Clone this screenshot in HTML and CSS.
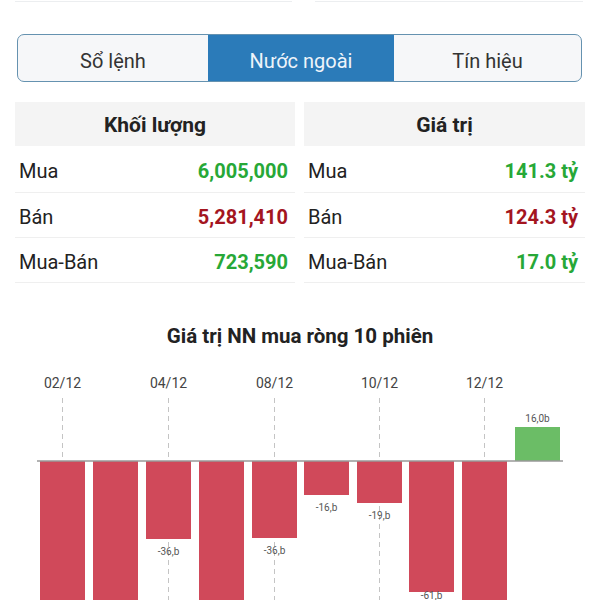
FILE: index.html
```html
<!DOCTYPE html>
<html lang="vi">
<head>
<meta charset="UTF-8">
<meta name="viewport" content="width=device-width, initial-scale=1.0">
<title>Nước ngoài</title>
<link rel="stylesheet" href="styles.css">
</head>
<body>
  <div class="top-strip">
    <div class="strip-cell left"></div>
    <div class="strip-cell right"></div>
  </div>

  <div class="tabs">
    <div class="tab">Sổ lệnh</div>
    <div class="tab active">Nước ngoài</div>
    <div class="tab">Tín hiệu</div>
  </div>

  <div class="stats">
    <div class="stat-table vol">
      <div class="stat-head">Khối lượng</div>
      <div class="stat-row first"><span class="lbl">Mua</span><span class="val up">6,005,000</span></div>
      <div class="stat-row"><span class="lbl">Bán</span><span class="val down">5,281,410</span></div>
      <div class="stat-row"><span class="lbl">Mua-Bán</span><span class="val up">723,590</span></div>
    </div>
    <div class="stat-table amt">
      <div class="stat-head">Giá trị</div>
      <div class="stat-row first"><span class="lbl">Mua</span><span class="val up">141.3 tỷ</span></div>
      <div class="stat-row"><span class="lbl">Bán</span><span class="val down">124.3 tỷ</span></div>
      <div class="stat-row"><span class="lbl">Mua-Bán</span><span class="val up">17.0 tỷ</span></div>
    </div>
  </div>

  <h2 class="chart-title">Giá trị NN mua ròng 10 phiên</h2>

  <svg class="chart" width="600" height="250" viewBox="0 0 600 250">
    <!-- grid lines -->
    <g class="grid">
      <line x1="62.5" y1="48" x2="62.5" y2="250"/>
      <line x1="168.5" y1="48" x2="168.5" y2="250"/>
      <line x1="274.5" y1="48" x2="274.5" y2="250"/>
      <line x1="379.5" y1="48" x2="379.5" y2="250"/>
      <line x1="484.5" y1="48" x2="484.5" y2="250"/>
    </g>
    <g class="dates">
      <text x="62.5" y="38">02/12</text>
      <text x="168.5" y="38">04/12</text>
      <text x="274.5" y="38">08/12</text>
      <text x="379.5" y="38">10/12</text>
      <text x="484.5" y="38">12/12</text>
    </g>
    <!-- bars, zero line at y=111 -->
    <g class="neg">
      <rect x="40" y="111" width="45" height="150"/>
      <rect x="93" y="111" width="45" height="150"/>
      <rect x="146" y="111" width="45" height="78"/>
      <rect x="199" y="111" width="45" height="150"/>
      <rect x="252" y="111" width="45" height="77"/>
      <rect x="304" y="111" width="45" height="34"/>
      <rect x="357" y="111" width="45" height="42"/>
      <rect x="409" y="111" width="45" height="131"/>
      <rect x="462" y="111" width="45" height="150"/>
    </g>
    <rect class="pos" x="515" y="77" width="45" height="34"/>
    <line class="zero" x1="37" y1="111" x2="563" y2="111"/>
    <g class="bar-lbl">
      <text x="168.5" y="205">-36,b</text>
      <text x="274.5" y="204">-36,b</text>
      <text x="326.5" y="161">-16,b</text>
      <text x="379.5" y="169">-19,b</text>
      <text x="431.5" y="249">-61,b</text>
      <text x="537.5" y="72">16,0b</text>
    </g>
  </svg>
</body>
</html>
```

FILE: styles.css
```css
body {
  margin: 0;
  background: #fff;
  font-family: Roboto, "Liberation Sans", sans-serif;
  color: #222;
  height: 600px;
  overflow: hidden;
}

.top-strip {
  display: flex;
  height: 2px;
}

.strip-cell {
  border-bottom: 1px solid #eceef0;
}

.strip-cell.left {
  margin-left: 15px;
  width: 277px;
}

.strip-cell.right {
  margin-left: 23px;
  width: 268px;
}

.tabs {
  display: grid;
  grid-template-columns: 190px 186px 1fr;
  margin: 32px 18px 0 17px;
  height: 46px;
  border: 1.5px solid #6592b0;
  border-radius: 7px;
  overflow: hidden;
  background: #f6f7f9;
}

.tab {
  display: flex;
  align-items: center;
  justify-content: center;
  padding-top: 6px;
  font-size: 20px;
  color: #333;
}

.tab.active {
  background: #2b7bb9;
  color: #eef4fa;
}

.stats {
  display: flex;
  margin: 20px 15px 0 15px;
  gap: 9px;
}

.stat-table.vol {
  width: 280px;
}

.stat-table.amt {
  width: 281px;
}

.stat-head {
  height: 44px;
  background: #f4f4f4;
  display: flex;
  align-items: center;
  justify-content: center;
  padding-top: 2px;
  box-sizing: border-box;
  font-size: 21px;
  font-weight: bold;
  color: #222;
}

.stat-row {
  display: flex;
  align-items: center;
  justify-content: space-between;
  height: 45px;
  padding: 4px 7px 0 4px;
  box-sizing: border-box;
  border-bottom: 1px solid #efefef;
  font-size: 20px;
}

.stat-row.first {
  height: 47px;
}

.lbl {
  color: #222;
}

.val {
  font-weight: bold;
}

.val.up {
  color: #27a837;
}

.val.down {
  color: #a4151f;
}

.chart-title {
  margin: 41px 0 0 0;
  line-height: 24px;
  font-size: 20.5px;
  font-weight: bold;
  text-align: center;
  color: #222;
}

.chart {
  display: block;
  margin-top: 2px;
}

.chart .grid line {
  stroke: #c4c4c4;
  stroke-width: 1;
  stroke-dasharray: 5 4;
}

.chart .dates text {
  font-size: 14px;
  fill: #444;
  text-anchor: middle;
}

.chart .neg rect {
  fill: #d0495a;
}

.chart .pos {
  fill: #6bbd66;
}

.chart .zero {
  stroke: #999;
  stroke-width: 1.5;
}

.chart .bar-lbl text {
  font-size: 10px;
  fill: #555;
  text-anchor: middle;
}
```
